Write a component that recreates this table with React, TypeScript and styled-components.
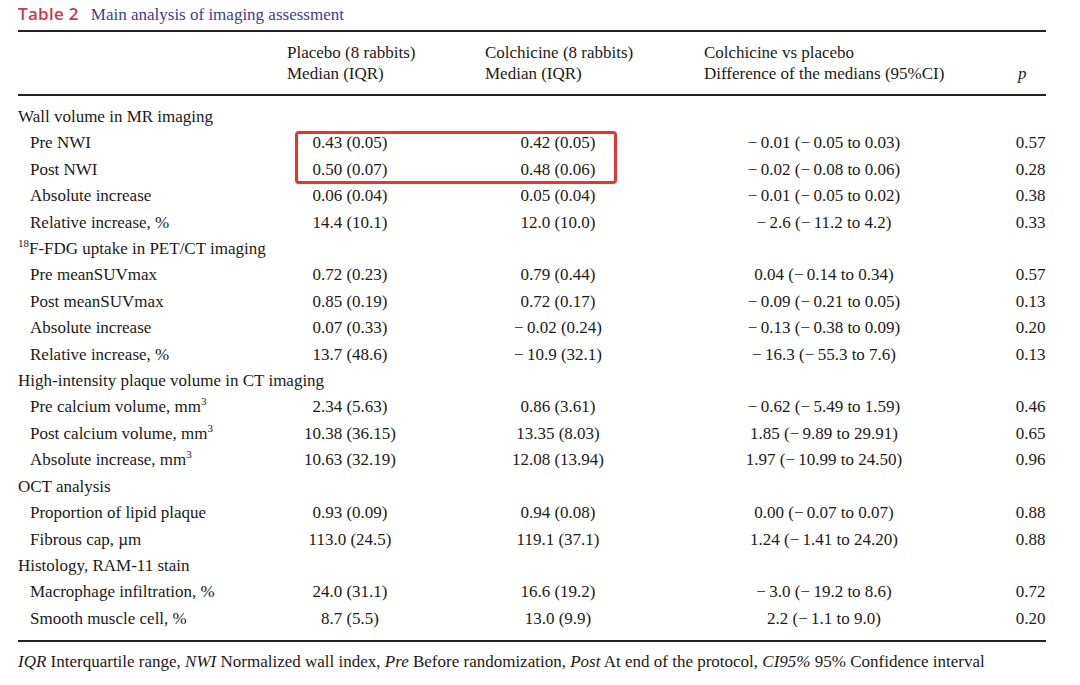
import * as React from 'react';
import styled, { createGlobalStyle } from 'styled-components';

const GlobalStyle = createGlobalStyle`
  html, body {
    margin: 0;
    padding: 0;
    background: #fff;
  }
`;

const Page = styled.div`
  width: 1080px;
  height: 685px;
  box-sizing: border-box;
  padding: 4px 34px 0 18px;
  font-family: "Liberation Serif", "Times New Roman", serif;
  font-size: 17px;
  color: #1a1a1a;
  position: relative;
`;

const Caption = styled.div`
  display: flex;
  align-items: baseline;
  height: 22px;
  line-height: 20px;
`;

const Label = styled.span`
  font-family: "Open Sans", "Liberation Sans", Arial, sans-serif;
  font-weight: 600;
  font-size: 17px;
  letter-spacing: 0.3px;
  color: #d4344f;
  margin-right: 12px;
`;

const CaptionText = styled.span`
  color: #3d3aa0;
  font-size: 17px;
`;

const Table = styled.div`
  margin-top: 4px;
  border-top: 2px solid #222;
  border-bottom: 2px solid #222;
  padding-bottom: 8px;
`;

const Head = styled.div`
  display: grid;
  grid-template-columns: 269px 198px 219px 311px 1fr;
  line-height: 21px;
  padding: 10px 0 10px;
  border-bottom: 2px solid #222;
  margin-bottom: 8px;
`;

const HeadCell = styled.div<{ $shift?: number }>`
  padding-left: ${p => p.$shift ?? 0}px;
  align-self: end;
`;

const Italic = styled.i`
  font-style: italic;
`;

const Row = styled.div`
  display: grid;
  grid-template-columns: 269px 198px 219px 311px 1fr;
  height: 26.42px;
  line-height: 26.42px;
  white-space: nowrap;
`;

const RowLabel = styled.div<{ $indent?: boolean }>`
  padding-left: ${p => (p.$indent ? 12 : 0)}px;
`;

const Value = styled.div<{ $w: number }>`
  width: ${p => p.$w}px;
  text-align: center;
`;

const Sup = styled.sup`
  font-size: 11px;
  line-height: 0;
  vertical-align: 7px;
`;

const Highlight = styled.div`
  position: absolute;
  left: 295px;
  top: 131px;
  width: 316px;
  height: 47px;
  border: 3px solid #f0302a;
  border-radius: 4px;
  pointer-events: none;
`;

const Note = styled.div`
  margin-top: 10px;
  line-height: 20px;
  white-space: nowrap;
`;

type Entry = {
  label: React.ReactNode;
  sub?: boolean;
  v?: [string, string, string, string];
};

const m = (s: string) => s.replace(/-/g, '\u2212\u2009');

const rows: Entry[] = [
  { label: 'Wall volume in MR imaging' },
  { label: 'Pre NWI', sub: true, v: ['0.43 (0.05)', '0.42 (0.05)', m('-0.01 (-0.05 to 0.03)'), '0.57'] },
  { label: 'Post NWI', sub: true, v: ['0.50 (0.07)', '0.48 (0.06)', m('-0.02 (-0.08 to 0.06)'), '0.28'] },
  { label: 'Absolute increase', sub: true, v: ['0.06 (0.04)', '0.05 (0.04)', m('-0.01 (-0.05 to 0.02)'), '0.38'] },
  { label: 'Relative increase, %', sub: true, v: ['14.4 (10.1)', '12.0 (10.0)', m('-2.6 (-11.2 to 4.2)'), '0.33'] },
  { label: <><Sup>18</Sup>F-FDG uptake in PET/CT imaging</> },
  { label: 'Pre meanSUVmax', sub: true, v: ['0.72 (0.23)', '0.79 (0.44)', m('0.04 (-0.14 to 0.34)'), '0.57'] },
  { label: 'Post meanSUVmax', sub: true, v: ['0.85 (0.19)', '0.72 (0.17)', m('-0.09 (-0.21 to 0.05)'), '0.13'] },
  { label: 'Absolute increase', sub: true, v: ['0.07 (0.33)', m('-0.02 (0.24)'), m('-0.13 (-0.38 to 0.09)'), '0.20'] },
  { label: 'Relative increase, %', sub: true, v: ['13.7 (48.6)', m('-10.9 (32.1)'), m('-16.3 (-55.3 to 7.6)'), '0.13'] },
  { label: 'High-intensity plaque volume in CT imaging' },
  { label: <>Pre calcium volume, mm<Sup>3</Sup></>, sub: true, v: ['2.34 (5.63)', '0.86 (3.61)', m('-0.62 (-5.49 to 1.59)'), '0.46'] },
  { label: <>Post calcium volume, mm<Sup>3</Sup></>, sub: true, v: ['10.38 (36.15)', '13.35 (8.03)', m('1.85 (-9.89 to 29.91)'), '0.65'] },
  { label: <>Absolute increase, mm<Sup>3</Sup></>, sub: true, v: ['10.63 (32.19)', '12.08 (13.94)', m('1.97 (-10.99 to 24.50)'), '0.96'] },
  { label: 'OCT analysis' },
  { label: 'Proportion of lipid plaque', sub: true, v: ['0.93 (0.09)', '0.94 (0.08)', m('0.00 (-0.07 to 0.07)'), '0.88'] },
  { label: 'Fibrous cap, µm', sub: true, v: ['113.0 (24.5)', '119.1 (37.1)', m('1.24 (-1.41 to 24.20)'), '0.88'] },
  { label: 'Histology, RAM-11 stain' },
  { label: 'Macrophage infiltration, %', sub: true, v: ['24.0 (31.1)', '16.6 (19.2)', m('-3.0 (-19.2 to 8.6)'), '0.72'] },
  { label: 'Smooth muscle cell, %', sub: true, v: ['8.7 (5.5)', '13.0 (9.9)', m('2.2 (-1.1 to 9.0)'), '0.20'] },
];

const widths = [126, 146, 240, 31];

export default function App() {
  return (
    <Page>
      <GlobalStyle />
      <Caption>
        <Label>Table 2</Label>
        <CaptionText>Main analysis of imaging assessment</CaptionText>
      </Caption>
      <Table>
        <Head>
          <div />
          <HeadCell>Placebo (8 rabbits)<br />Median (IQR)</HeadCell>
          <HeadCell>Colchicine (8 rabbits)<br />Median (IQR)</HeadCell>
          <HeadCell>Colchicine vs placebo<br />Difference of the medians (95%CI)</HeadCell>
          <HeadCell $shift={3}><Italic>p</Italic></HeadCell>
        </Head>
        {rows.map((r, i) => (
          <Row key={i}>
            <RowLabel $indent={r.sub}>{r.label}</RowLabel>
            {r.v?.map((v, j) => (
              <Value key={j} $w={widths[j]}>{v}</Value>
            ))}
          </Row>
        ))}
      </Table>
      <Note>
        <Italic>IQR</Italic> Interquartile range, <Italic>NWI</Italic> Normalized wall index,{' '}
        <Italic>Pre</Italic> Before randomization, <Italic>Post</Italic> At end of the protocol,{' '}
        <Italic>CI95%</Italic> 95% Confidence interval
      </Note>
      <Highlight />
    </Page>
  );
}
